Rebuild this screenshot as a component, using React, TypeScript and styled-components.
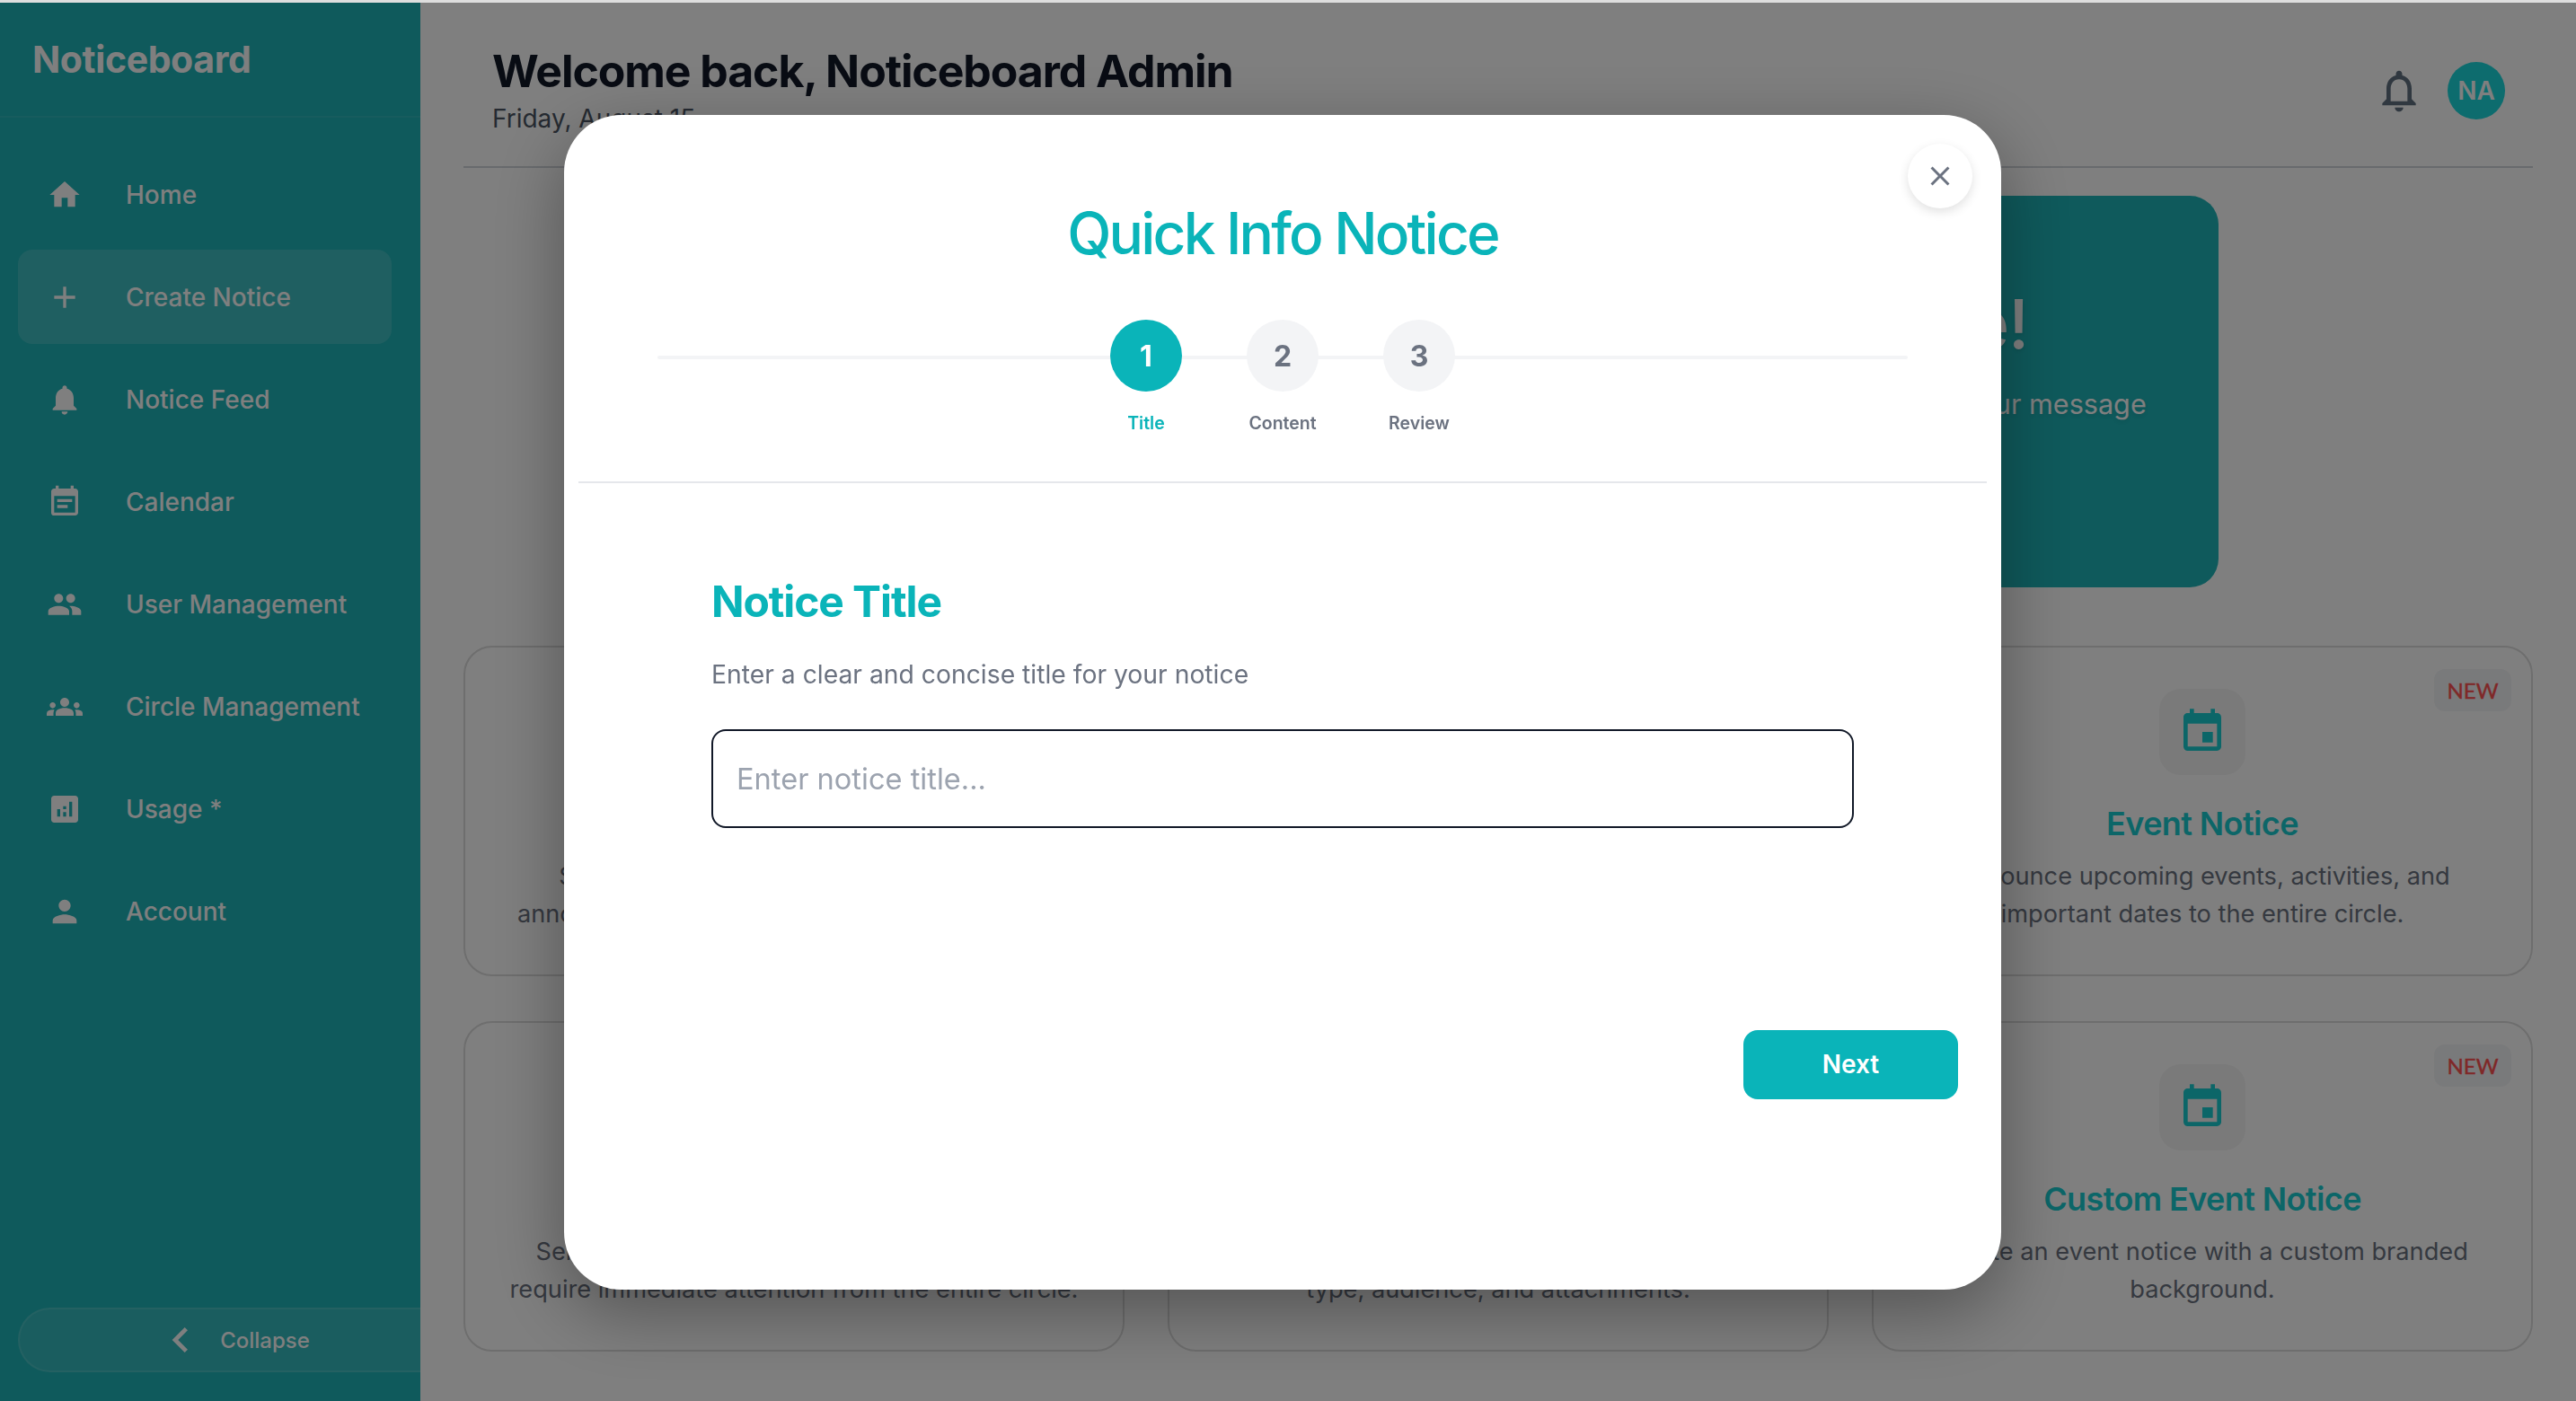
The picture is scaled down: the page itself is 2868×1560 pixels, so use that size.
import React from 'react';
import styled, { createGlobalStyle } from 'styled-components';
import {
  MdAdd,
  MdAnalytics,
  MdChevronLeft,
  MdClose,
  MdEvent,
  MdEventNote,
  MdGroups,
  MdHome,
  MdNotifications,
  MdNotificationsNone,
  MdPeople,
  MdPerson,
} from 'react-icons/md';

const NAV_ITEMS = [
  { label: 'Home', icon: MdHome },
  { label: 'Create Notice', icon: MdAdd, active: true },
  { label: 'Notice Feed', icon: MdNotifications },
  { label: 'Calendar', icon: MdEventNote },
  { label: 'User Management', icon: MdPeople },
  { label: 'Circle Management', icon: MdGroups },
  { label: 'Usage *', icon: MdAnalytics },
  { label: 'Account', icon: MdPerson },
];

const NOTICE_TYPES = [
  {
    title: 'Quick Info Notice',
    text: 'Share quick updates, reminders, and key announcements with all of your circle members.',
  },
  {
    title: 'Standard Notice',
    text: 'Publish a regular notice with a title, body text, and a chosen audience for it.',
  },
  {
    title: 'Event Notice',
    text: 'Announce upcoming events, activities, and important dates to the entire circle.',
    isNew: true,
  },
  {
    title: 'Urgent Notice',
    text: 'Send urgent announcements for matters that require immediate attention from the entire circle.',
  },
  {
    title: 'Custom Notice',
    text: 'Build a fully customized notice with your own type, audience, and attachments.',
  },
  {
    title: 'Custom Event Notice',
    text: 'Create an event notice with a custom branded background.',
    isNew: true,
  },
];

const STEPS = ['Title', 'Content', 'Review'];

const App = () => (
  <>
    <GlobalStyle />
    <Page>
      <Sidebar>
        <Brand>Noticeboard</Brand>
        <Nav>
          {NAV_ITEMS.map(({ label, icon: Icon, active }) => (
            <NavItem key={label} $active={active}>
              <Icon size={40} />
              <span>{label}</span>
            </NavItem>
          ))}
        </Nav>
        <CollapseBtn>
          <MdChevronLeft size={56} />
          <span>Collapse</span>
        </CollapseBtn>
      </Sidebar>

      <Main>
        <Header>
          <div>
            <Welcome>Welcome back, Noticeboard Admin</Welcome>
            <DateLine>Friday, August 15</DateLine>
          </div>
          <HeaderRight>
            <MdNotificationsNone size={56} color="#607080" />
            <Avatar>NA</Avatar>
          </HeaderRight>
        </Header>

        <HeroRow>
          <Hero>
            <HeroTitle>Create Notice!</HeroTitle>
            <HeroText>Choose a notice type that will best suit your message</HeroText>
          </Hero>
        </HeroRow>

        <CardGrid>
          {NOTICE_TYPES.map((card) => (
            <Card key={card.title}>
              {card.isNew && <NewBadge>NEW</NewBadge>}
              <IconBox>
                <MdEvent size={56} />
              </IconBox>
              <CardTitle>{card.title}</CardTitle>
              <CardText>{card.text}</CardText>
            </Card>
          ))}
        </CardGrid>
      </Main>
    </Page>

    <Overlay>
      <Modal>
        <CloseBtn>
          <MdClose size={36} />
        </CloseBtn>
        <ModalHeader>
          <ModalTitle>Quick Info Notice</ModalTitle>
          <Stepper>
            {STEPS.map((step, i) => (
              <Step key={step}>
                <StepCircle $active={i === 0}>{i + 1}</StepCircle>
                <StepLabel $active={i === 0}>{step}</StepLabel>
              </Step>
            ))}
          </Stepper>
        </ModalHeader>
        <ModalBody>
          <SectionTitle>Notice Title</SectionTitle>
          <SectionText>Enter a clear and concise title for your notice</SectionText>
          <TitleInput type="text" placeholder="Enter notice title..." />
        </ModalBody>
        <ModalFooter>
          <NextBtn>Next</NextBtn>
        </ModalFooter>
      </Modal>
    </Overlay>
  </>
);

export default App;

const GlobalStyle = createGlobalStyle`
  * {
    box-sizing: border-box;
  }
  html, body {
    margin: 0;
    height: 100%;
    overflow: hidden;
    background: #dedede;
    font-family: Inter, "Liberation Sans", sans-serif;
  }
`;

const Page = styled.div`
  display: flex;
  height: 1557px;
  margin-top: 3px;
  background: #fff;
  overflow: hidden;
`;

const Sidebar = styled.aside`
  flex: 0 0 468px;
  display: flex;
  flex-direction: column;
  background: #1eb4b8;
  color: #fff;
  overflow: hidden;
`;

const Brand = styled.div`
  height: 128px;
  flex-shrink: 0;
  padding: 38px 0 0 36px;
  font-size: 41px;
  line-height: 50px;
  font-weight: 700;
  letter-spacing: -0.4px;
  border-bottom: 2px solid rgba(255, 255, 255, 0.08);
`;

const Nav = styled.nav`
  flex: 1;
  display: flex;
  flex-direction: column;
  gap: 9px;
  padding: 33px 32px 0 20px;
`;

const NavItem = styled.div<{ $active?: boolean }>`
  height: 105px;
  display: flex;
  align-items: center;
  gap: 48px;
  padding-left: 32px;
  border-radius: 16px;
  font-size: 28px;
  font-weight: 500;
  background: ${(p) => (p.$active ? 'rgba(255, 255, 255, 0.15)' : 'transparent')};
`;

const CollapseBtn = styled.div`
  flex-shrink: 0;
  width: 506px;
  height: 72px;
  margin: 0 0 32px 20px;
  display: flex;
  align-items: center;
  justify-content: center;
  gap: 16px;
  border: 2px solid rgba(255, 255, 255, 0.1);
  border-radius: 36px;
  background: rgba(255, 255, 255, 0.1);
  font-size: 24px;
  font-weight: 500;

  svg {
    margin-left: -28px;
  }
`;

const Main = styled.main`
  flex: 1;
  min-width: 0;
  padding: 0 48px 0 48px;
`;

const Header = styled.header`
  display: flex;
  justify-content: space-between;
  align-items: flex-start;
  height: 184px;
  padding: 44px 31px 0 32px;
  border-bottom: 2px solid #d1d5db;
`;

const Welcome = styled.h1`
  margin: 0;
  font-size: 50px;
  line-height: 64px;
  font-weight: 700;
  letter-spacing: -1.1px;
  color: #111827;
`;

const DateLine = styled.div`
  margin-top: 3px;
  font-size: 28px;
  line-height: 36px;
  color: #4b5563;
`;

const HeaderRight = styled.div`
  display: flex;
  align-items: center;
  gap: 26px;
  margin-top: 22px;
`;

const Avatar = styled.div`
  width: 64px;
  height: 64px;
  border-radius: 50%;
  display: flex;
  align-items: center;
  justify-content: center;
  background: #1ad8dc;
  color: #fff;
  font-size: 28px;
  font-weight: 600;
`;

const HeroRow = styled.div`
  display: flex;
  justify-content: flex-end;
  padding: 31px 350px 0 0;
`;

const Hero = styled.section`
  width: 932px;
  height: 436px;
  border-radius: 32px;
  background: #1eb4b8;
  color: #fff;
  display: flex;
  flex-direction: column;
  align-items: center;
  justify-content: center;
  text-shadow: 0 2px 4px rgba(0, 0, 0, 0.1);
`;

const HeroTitle = styled.div`
  font-size: 76px;
  line-height: 90px;
  font-weight: 500;
  letter-spacing: -1px;
  margin-bottom: 23px;
  margin-top: -85px;
`;

const HeroText = styled.div`
  font-size: 30.6px;
  line-height: 44px;
`;

const CardGrid = styled.div`
  display: grid;
  grid-template-columns: repeat(3, 1fr);
  gap: 50px 48px;
  margin-top: 65px;
`;

const Card = styled.article`
  position: relative;
  display: flex;
  flex-direction: column;
  align-items: center;
  padding: 46px;
  border: 2px solid #dcdcdc;
  border-radius: 32px;
  text-align: center;
`;

const NewBadge = styled.span`
  position: absolute;
  top: 24px;
  right: 22px;
  width: 86px;
  height: 47px;
  display: flex;
  align-items: center;
  justify-content: center;
  border-radius: 12px;
  background: #f3f4f6;
  color: #ff5050;
  font-family: Lato, Inter, sans-serif;
  font-size: 24px;
  font-weight: 400;
  -webkit-text-stroke: 0.4px #ff5050;
`;

const IconBox = styled.div`
  width: 96px;
  height: 96px;
  display: flex;
  align-items: center;
  justify-content: center;
  border-radius: 24px;
  background: #f4f4f4;
  color: #18ccd0;
`;

const CardTitle = styled.h3`
  margin: 32px 0 16px;
  font-size: 36px;
  line-height: 44px;
  font-weight: 600;
  letter-spacing: -0.6px;
  color: #18ccd0;
`;

const CardText = styled.p`
  margin: 0;
  font-size: 27.2px;
  line-height: 42px;
  color: #6b7280;
`;

const Overlay = styled.div`
  position: fixed;
  inset: 3px 0 0 0;
  display: flex;
  align-items: center;
  justify-content: center;
  padding-right: 12px;
  background: rgba(0, 0, 0, 0.5);
`;

const Modal = styled.div`
  position: relative;
  width: 1600px;
  height: 1308px;
  padding: 0 16px;
  border-radius: 64px;
  background: #fff;
  box-shadow: 0 24px 80px rgba(0, 0, 0, 0.35);
`;

const CloseBtn = styled.button`
  position: absolute;
  top: 32px;
  right: 32px;
  width: 72px;
  height: 72px;
  padding: 0;
  display: flex;
  align-items: center;
  justify-content: center;
  border: none;
  border-radius: 50%;
  background: #fff;
  color: #6b7280;
  box-shadow: 0 4px 12px rgba(0, 0, 0, 0.12);
`;

const ModalHeader = styled.div`
  display: flex;
  flex-direction: column;
  align-items: center;
  padding: 94px 0 52px;
  border-bottom: 2px solid #e5e7eb;
`;

const ModalTitle = styled.h2`
  margin: 0 0 58px;
  font-size: 64px;
  line-height: 76px;
  font-weight: 500;
  letter-spacing: -2.8px;
  color: #0ab4b9;
`;

const Stepper = styled.div`
  position: relative;
  align-self: stretch;
  margin: 0 88px;
  display: flex;
  justify-content: center;
  gap: 72px;

  &::before {
    content: '';
    position: absolute;
    top: 40px;
    left: 0;
    right: 0;
    height: 4px;
    border-radius: 2px;
    background: #f3f4f6;
  }
`;

const Step = styled.div`
  position: relative;
  width: 80px;
  display: flex;
  flex-direction: column;
  align-items: center;
`;

const StepCircle = styled.div<{ $active?: boolean }>`
  width: 80px;
  height: 80px;
  padding-top: 2px;
  border-radius: 50%;
  display: flex;
  align-items: center;
  justify-content: center;
  font-size: 32px;
  font-weight: 700;
  background: ${(p) => (p.$active ? '#0ab4b9' : '#f3f4f6')};
  color: ${(p) => (p.$active ? '#fff' : '#6b7280')};
`;

const StepLabel = styled.div<{ $active?: boolean }>`
  margin-top: 22px;
  font-size: 19.5px;
  line-height: 26px;
  font-weight: 600;
  color: ${(p) => (p.$active ? '#0ab4b9' : '#6b7280')};
`;

const ModalBody = styled.div`
  display: flex;
  flex-direction: column;
  padding: 104px 148px 0;
`;

const SectionTitle = styled.h3`
  margin: 0 0 33px;
  font-size: 48px;
  line-height: 56px;
  font-weight: 700;
  letter-spacing: -1.1px;
  color: #0ab4b9;
`;

const SectionText = styled.p`
  margin: 0 0 41px;
  font-size: 28.3px;
  line-height: 40px;
  color: #6b7280;
`;

const TitleInput = styled.input`
  height: 110px;
  padding: 0 26px;
  border: 2px solid #111827;
  border-radius: 16px;
  outline: none;
  font-family: inherit;
  font-size: 32.6px;

  &::placeholder {
    color: #9ca3af;
  }
`;

const ModalFooter = styled.div`
  display: flex;
  justify-content: flex-end;
  padding: 225px 32px 0 0;
`;

const NextBtn = styled.button`
  width: 239px;
  height: 77px;
  border: none;
  border-radius: 16px;
  background: #0ab4b9;
  color: #fff;
  font-family: inherit;
  font-size: 28px;
  font-weight: 600;
`;
